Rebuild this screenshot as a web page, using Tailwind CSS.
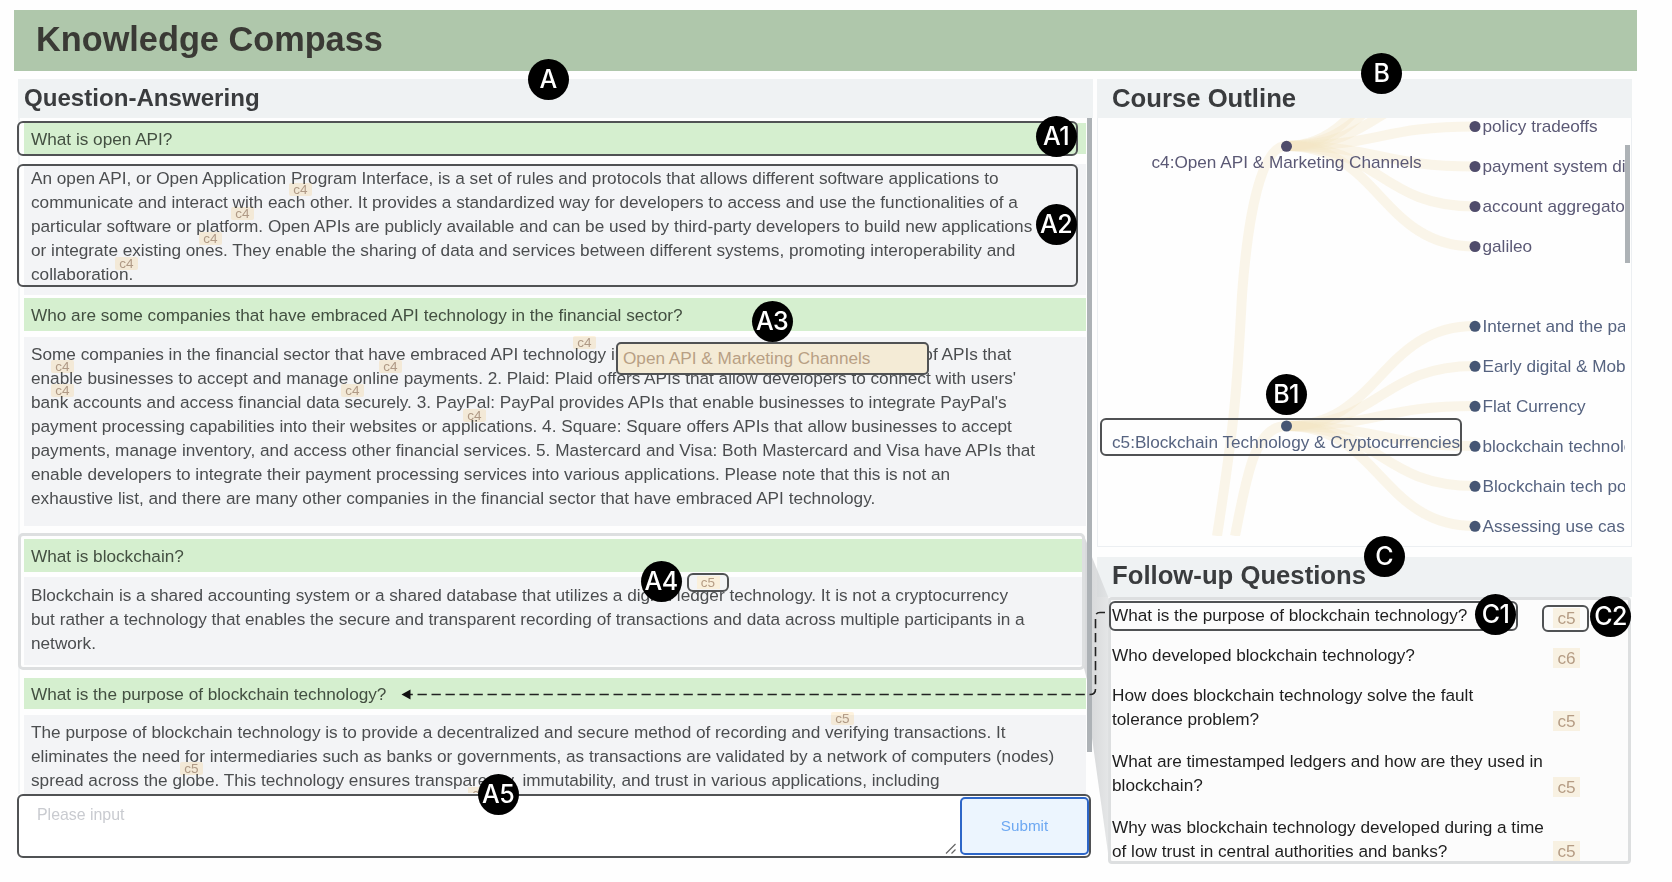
<!DOCTYPE html>
<html lang="en">
<head>
<meta charset="utf-8">
<title>Knowledge Compass</title>
<script src="https://cdn.jsdelivr.net/npm/@tailwindcss/browser@4"></script>
</head>
<body class="relative h-[882px] w-[1672px] overflow-hidden bg-[#fefefe] font-['Liberation_Sans',Arial,sans-serif] text-[17.210px] leading-[24.1px] text-[#4b4d4f]">

<header class="ml-[14px] mt-[10px] flex h-[61px] w-[1623px] items-center bg-[#afc7ab] pl-[22px]">
  <h1 class="pb-[3px] text-[34.300px] leading-none font-bold whitespace-nowrap text-[#3a3a35]">Knowledge Compass</h1>
</header>

<main class="mt-2 ml-[18px] flex gap-[4px]">
  <!-- Question answering -->
  <section class="w-[1075px]">
    <h2 class="flex h-[39px] items-center bg-[#eff2f3] pl-[6px] text-[24.100px] font-bold text-[#3a3c3e]">Question-Answering</h2>
    <div class="relative flex h-[676px] flex-col overflow-hidden border-l-2 border-[#f3f5f6] pl-1 whitespace-nowrap">
      <div class="mt-[5px] h-[31px] w-[1062px] shrink-0 bg-[#d5efcf] pl-[7px] leading-[33px] text-[#434f41]">What is open API?</div>
      <div class="mt-[10px] h-[131px] w-[1062px] shrink-0 bg-[#f3f4f6] pt-[1.500px] pl-[7px]">An open API, or Open Application Program Interface, is a set of rules and protocols that allows different software applications to<br>communicate and interact with each other. It provides a standardized way for developers to access and use the functionalities of a<br>particular software or platform. Open APIs are publicly available and can be used by third-party developers to build new applications<br>or integrate existing ones. They enable the sharing of data and services between different systems, promoting interoperability and<br>collaboration.</div>
      <div class="mt-[3px] h-[33px] w-[1062px] shrink-0 bg-[#d5efcf] pl-[7px] leading-[35px] text-[#434f41]">Who are some companies that have embraced API technology in the financial sector?</div>
      <div class="mt-[6px] h-[189px] w-[1062px] shrink-0 bg-[#f3f4f6] pt-[4.500px] pl-[7px]">Some companies in the financial sector that have embraced API technology include: 1. Stripe: Stripe provides a suite of APIs that<br>enable businesses to accept and manage online payments. 2. Plaid: Plaid offers APIs that allow developers to connect with users'<br>bank accounts and access financial data securely. 3. PayPal: PayPal provides APIs that enable businesses to integrate PayPal's<br>payment processing capabilities into their websites or applications. 4. Square: Square offers APIs that allow businesses to accept<br>payments, manage inventory, and access other financial services. 5. Mastercard and Visa: Both Mastercard and Visa have APIs that<br>enable developers to integrate their payment processing services into various applications. Please note that this is not an<br>exhaustive list, and there are many other companies in the financial sector that have embraced API technology.</div>
      <div class="mt-[13px] h-[33px] w-[1059px] shrink-0 bg-[#d5efcf] pl-[7px] leading-[34px] text-[#434f41]">What is blockchain?</div>
      <div class="mt-[5px] h-[88px] w-[1059px] shrink-0 bg-[#f3f4f6] pt-[6px] pl-[7px]">Blockchain is a shared accounting system or a shared database that utilizes a digital ledger technology. It is not a cryptocurrency<br>but rather a technology that enables the secure and transparent recording of transactions and data across multiple participants in a<br>network.</div>
      <div class="mt-[13px] h-[31px] w-[1062px] shrink-0 bg-[#d5efcf] pl-[7px] leading-[33px] text-[#434f41]">What is the purpose of blockchain technology?</div>
      <div class="mt-[6px] h-[84px] w-[1062px] shrink-0 bg-[#f3f4f6] pt-[4.500px] pl-[7px]">The purpose of blockchain technology is to provide a decentralized and secure method of recording and verifying transactions. It<br>eliminates the need for intermediaries such as banks or governments, as transactions are validated by a network of computers (nodes)<br>spread across the globe. This technology ensures transparency, immutability, and trust in various applications, including</div>
      <div class="absolute top-0 left-[1067px] h-[634px] w-[5px] bg-[#adb2b6]"></div>
    </div>
    <div class="-ml-px flex h-[64px] w-[1074px] justify-between rounded-md border-2 border-[#505254] bg-white">
      <div class="relative flex-1 pt-[7px] pl-[18px] text-[15.900px] text-[#c9cbd0]">Please input
        <svg class="absolute right-[4px] bottom-[2px] h-[11px] w-[11px]" viewBox="0 0 11 11" stroke="#666" stroke-width="1.2"><path d="M1 10.500L10.500 1M6.500 10.500L10.500 6.500"/></svg>
      </div>
      <button class="mt-px h-[58px] w-[129px] rounded-[5px] border-2 border-[#2d66c8] bg-[#ecf5fe] text-[15.200px] text-[#6da8f2]">Submit</button>
    </div>
  </section>

  <!-- Outline and follow-ups -->
  <section class="w-[535px]">
    <h2 class="flex h-[39px] items-center bg-[#eff2f3] pl-[15px] text-[25.700px] font-bold text-[#3a3c3e]">Course Outline</h2>
    <div class="h-[429px] overflow-hidden border border-t-0 border-[#eceff2]">
      <svg class="block h-[418px] w-[533px]" viewBox="1099 118 533 418">
        <g fill="none" stroke="#f3e6c4" stroke-opacity=".36" stroke-width="10">
          <path d="M1218 536C1236 420 1238 390 1243 295C1249 215 1262 146 1287 146"/>
          <path d="M1236 536C1247 480 1255 426 1287 426"/>
          <path d="M1287 146C1381 146 1381 6.500 1476 6.500"/>
          <path d="M1287 146C1381 146 1381 46.500 1476 46.500"/>
          <path d="M1287 146C1381 146 1381 86.500 1476 86.500"/>
          <path d="M1287 146C1381 146 1381 126.500 1476 126.500"/>
          <path d="M1287 146C1381 146 1381 166.500 1476 166.500"/>
          <path d="M1287 146C1381 146 1381 206.500 1476 206.500"/>
          <path d="M1287 146C1381 146 1381 246.500 1476 246.500"/>
          <path d="M1287 426C1381 426 1381 326 1476 326"/>
          <path d="M1287 426C1381 426 1381 366 1476 366"/>
          <path d="M1287 426C1381 426 1381 406 1476 406"/>
          <path d="M1287 426C1381 426 1381 446 1476 446"/>
          <path d="M1287 426C1381 426 1381 486 1476 486"/>
          <path d="M1287 426C1381 426 1381 526 1476 526"/>
        </g>
        <g fill="#4f4c6b">
          <circle cx="1287.500" cy="146.300" r="5.500"/><circle cx="1476" cy="126.500" r="5.500"/><circle cx="1476" cy="166.500" r="5.500"/><circle cx="1476" cy="206.500" r="5.500"/><circle cx="1476" cy="246.500" r="5.500"/>
        </g>
        <g fill="#465674">
          <circle cx="1287.500" cy="426" r="5.500"/><circle cx="1476" cy="326.300" r="5.500"/><circle cx="1476" cy="366.300" r="5.500"/><circle cx="1476" cy="406.300" r="5.500"/><circle cx="1476" cy="446.300" r="5.500"/><circle cx="1476" cy="486.300" r="5.500"/><circle cx="1476" cy="526.300" r="5.500"/>
        </g>
        <clipPath id="labels"><rect x="1099" y="118" width="527" height="418"/></clipPath>
        <g clip-path="url(#labels)" font-size="17.180">
          <g fill="#5b5975">
            <text x="1152.500" y="168">c4:Open API &amp; Marketing Channels</text>
            <text x="1483.500" y="132">policy tradeoffs</text>
            <text x="1483.500" y="172">payment system di</text>
            <text x="1483.500" y="212">account aggregato</text>
            <text x="1483.500" y="252">galileo</text>
          </g>
          <g fill="#566380">
            <text x="1113" y="447.500">c5:Blockchain Technology &amp; Cryptocurrencies</text>
            <text x="1483.500" y="332">Internet and the pa</text>
            <text x="1483.500" y="372">Early digital &amp; Mob</text>
            <text x="1483.500" y="412">Flat Currency</text>
            <text x="1483.500" y="452">blockchain technolo</text>
            <text x="1483.500" y="492">Blockchain tech po</text>
            <text x="1483.500" y="532">Assessing use cas</text>
          </g>
        </g>
        <rect x="1626" y="145" width="5" height="118" fill="#adb2b6"/>
      </svg>
    </div>
    <h2 class="mt-[10px] flex h-[40px] items-center bg-[#eff2f3] pb-[4px] pl-[15px] text-[25.700px] font-bold text-[#3a3c3e]">Follow-up Questions</h2>
    <div class="ml-[11px] flex h-[267px] w-[523px] flex-col overflow-hidden rounded-[4px] border-[3px] border-[#dddfe0] bg-[#fcfcfc] pl-px whitespace-nowrap text-[#1e1e1e]">
      <div class="flex h-[34px] shrink-0 pt-[3px]"><p class="w-[441px]">What is the purpose of blockchain technology?</p><span class="mt-[5px] h-5 w-[27px] bg-[#f8f1e2] text-center leading-[21px] text-[#b59c84]">c5</span></div>
      <div class="flex h-[44px] shrink-0 pt-[9px]"><p class="w-[441px]">Who developed blockchain technology?</p><span class="mt-[5px] h-5 w-[27px] bg-[#f8f1e2] text-center leading-[21px] text-[#b59c84]">c6</span></div>
      <div class="flex h-[66px] shrink-0 pt-[5px]"><p class="w-[441px]">How does blockchain technology solve the fault<br>tolerance problem?</p><span class="mt-[28px] h-5 w-[27px] bg-[#f8f1e2] text-center leading-[21px] text-[#b59c84]">c5</span></div>
      <div class="flex h-[66px] shrink-0 pt-[5px]"><p class="w-[441px]">What are timestamped ledgers and how are they used in<br>blockchain?</p><span class="mt-[28px] h-5 w-[27px] bg-[#f8f1e2] text-center leading-[21px] text-[#b59c84]">c5</span></div>
      <div class="flex h-[66px] shrink-0 pt-[5px]"><p class="w-[441px]">Why was blockchain technology developed during a time<br>of low trust in central authorities and banks?</p><span class="mt-[26px] h-5 w-[27px] bg-[#f8f1e2] text-center leading-[21px] text-[#b59c84]">c5</span></div>
    </div>
  </section>
</main>

<!-- Citation tags floating over the answers -->
<div class="text-center text-[13.500px] leading-[13px] text-[#b8a08a] *:absolute *:h-[13px] *:w-[23px] *:rounded-[2px] *:bg-[#fff4df] *:mix-blend-multiply">
  <span class="top-[183px] left-[289px]">c4</span>
  <span class="top-[207px] left-[231px]">c4</span>
  <span class="top-[232px] left-[199px]">c4</span>
  <span class="top-[257px] left-[115px]">c4</span>
  <span class="top-[336px] left-[573px]">c4</span>
  <span class="top-[360px] left-[51px]">c4</span>
  <span class="top-[360px] left-[379px]">c4</span>
  <span class="top-[384px] left-[51px]">c4</span>
  <span class="top-[384px] left-[341px]">c4</span>
  <span class="top-[409px] left-[463px]">c4</span>
  <span class="top-[712px] left-[831px]">c5</span>
  <span class="top-[762px] left-[180px]">c5</span>
</div>
<div class="absolute top-[787px] left-[468px] h-[6px] w-[23px] overflow-hidden bg-[#fff4df] text-center text-[13.500px] leading-[13px] text-[#b8a08a] mix-blend-multiply">c5</div>

<svg class="absolute inset-0 h-[882px] w-[1672px]" viewBox="0 0 1672 882" fill="none">
  <defs><linearGradient id="beam" x1="0" x2="1"><stop offset="0" stop-color="#c9cbcd" stop-opacity=".7"/><stop offset="1" stop-color="#dfe1e2" stop-opacity=".8"/></linearGradient></defs>
  <path d="M1092 557L1109 599V860L1092 738Z" fill="url(#beam)"/>
  <path d="M1084 536L1087 543V680L1084 668Z" fill="#c9cbcd" fill-opacity=".7"/>
  <path d="M1105 612.500H1100Q1095.500 612.500 1095.500 617V689Q1095.500 694.500 1090 694.500H408" stroke="#222" stroke-width="1.600" stroke-dasharray="9.300 4.700"/>
  <path d="M401.500 694.500L410.500 689.500V699.500Z" fill="#111"/>
</svg>

<!-- Annotation frames -->
<div class="absolute top-[533px] left-[18px] h-[137px] w-[1067px] rounded-[5px] border-[3.500px] border-[#dddfe0]"></div>
<div class="absolute top-[121px] left-[17px] h-[35px] w-[1061px] rounded-md border-2 border-[#505254]"></div>
<div class="absolute top-[164px] left-[17px] h-[123px] w-[1061px] rounded-md border-2 border-[#505254]"></div>
<div class="absolute top-[342px] left-[616px] h-[33px] w-[313px] rounded-[5px] border-2 border-[#505254] bg-[#f4ebd6] pl-[5px] leading-[29px] text-[#b89f84]">Open API &amp; Marketing Channels</div>
<div class="absolute top-[573px] left-[687px] flex h-[19px] w-[42px] items-center justify-center rounded-md border-2 border-[#505254] bg-[#f3f4f6]"><span class="h-[13px] w-[23px] bg-[#faf0dc] text-center text-[13.500px] leading-[13px] text-[#b59c84]">c5</span></div>
<div class="absolute top-[418px] left-[1100px] h-[38px] w-[362px] rounded-md border-2 border-[#505254]"></div>
<div class="absolute top-[601px] left-[1109px] h-[30px] w-[409px] rounded-md border-2 border-[#505254]"></div>
<div class="absolute top-[605px] left-[1542px] h-[27px] w-[47px] rounded-md border-2 border-[#505254]"></div>

<!-- Annotation markers -->
<div class="font-[Inter,sans-serif] text-[25px] font-medium tracking-tight text-white *:absolute *:flex *:size-[41px] *:items-center *:justify-center *:rounded-full *:bg-black">
  <span class="top-[59px] left-[527.500px]">A</span>
  <span class="top-[53px] left-[1361px]">B</span>
  <span class="top-[116px] left-[1035.500px]">A1</span>
  <span class="top-[204px] left-[1035.500px]">A2</span>
  <span class="top-[301px] left-[751.500px]">A3</span>
  <span class="top-[561px] left-[640.500px]">A4</span>
  <span class="top-[774px] left-[477.500px]">A5</span>
  <span class="top-[374px] left-[1265.500px]">B1</span>
  <span class="top-[536px] left-[1363.500px]">C</span>
  <span class="top-[594px] left-[1475px]">C1</span>
  <span class="top-[596px] left-[1590px]">C2</span>
</div>
</body>
</html>
